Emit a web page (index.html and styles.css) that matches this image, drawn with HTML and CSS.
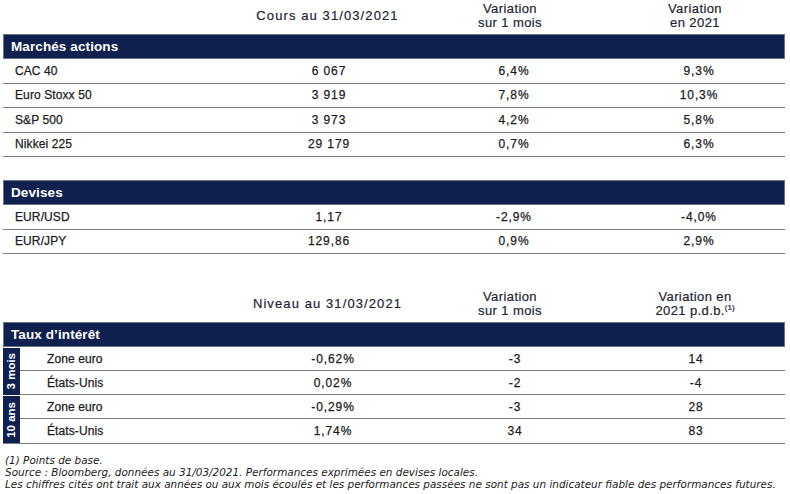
FILE: index.html
```html
<!DOCTYPE html>
<html lang="fr">
<head>
<meta charset="utf-8">
<title>Marchés</title>
<link rel="stylesheet" href="styles.css">
</head>
<body>
<div class="page">
  <section class="tbl">
    <div class="head">
      <div></div>
      <div class="hc date">Cours au 31/03/2021</div>
      <div class="hc">Variation<br>sur 1 mois</div>
      <div class="hc">Variation<br>en 2021</div>
    </div>
    <div class="bar">Marchés actions</div>
    <div class="row"><div class="lbl">CAC 40</div><div class="num">6 067</div><div class="num">6,4%</div><div class="num">9,3%</div></div>
    <div class="row"><div class="lbl">Euro Stoxx 50</div><div class="num">3 919</div><div class="num">7,8%</div><div class="num">10,3%</div></div>
    <div class="row"><div class="lbl">S&amp;P 500</div><div class="num">3 973</div><div class="num">4,2%</div><div class="num">5,8%</div></div>
    <div class="row"><div class="lbl">Nikkei 225</div><div class="num">29 179</div><div class="num">0,7%</div><div class="num">6,3%</div></div>
  </section>

  <section class="tbl t2">
    <div class="bar">Devises</div>
    <div class="row"><div class="lbl">EUR/USD</div><div class="num">1,17</div><div class="num">-2,9%</div><div class="num">-4,0%</div></div>
    <div class="row"><div class="lbl">EUR/JPY</div><div class="num">129,86</div><div class="num">0,9%</div><div class="num">2,9%</div></div>
  </section>

  <section class="tbl t3">
    <div class="head">
      <div></div>
      <div class="hc date">Niveau au 31/03/2021</div>
      <div class="hc">Variation<br>sur 1 mois</div>
      <div class="hc">Variation en<br>2021 p.d.b.<sup>(1)</sup></div>
    </div>
    <div class="bar">Taux d’intérêt</div>
    <div class="grp">
      <div class="side"><span>3 mois</span></div>
      <div class="rows">
        <div class="row r3"><div class="lbl">Zone euro</div><div class="num">-0,62%</div><div class="num">-3</div><div class="num">14</div></div>
        <div class="row r3"><div class="lbl">États-Unis</div><div class="num">0,02%</div><div class="num">-2</div><div class="num">-4</div></div>
      </div>
    </div>
    <div class="grp last">
      <div class="side"><span>10 ans</span></div>
      <div class="rows">
        <div class="row r3"><div class="lbl">Zone euro</div><div class="num">-0,29%</div><div class="num">-3</div><div class="num">28</div></div>
        <div class="row r3"><div class="lbl">États-Unis</div><div class="num">1,74%</div><div class="num">34</div><div class="num">83</div></div>
      </div>
    </div>
  </section>

  <footer class="notes">
    <p>(1) Points de base.</p>
    <p>Source : Bloomberg, données au 31/03/2021. Performances exprimées en devises locales.</p>
    <p>Les chiffres cités ont trait aux années ou aux mois écoulés et les performances passées ne sont pas un indicateur fiable des performances futures.</p>
  </footer>
</div>
</body>
</html>
```

FILE: styles.css
```css
* { box-sizing: border-box; }
html, body { margin: 0; padding: 0; background: #ffffff; }
body { font-family: "Liberation Sans", Arial, sans-serif; color: #1b1b1b; }

.page { width: 790px; padding: 0 5px 0 3px; }

.tbl { width: 782px; }
.t2 { margin-top: 23px; }
.t3 { margin-top: 34px; }

.head {
  display: grid;
  grid-template-columns: 237px 175px 190px 180px;
  height: 34px;
  padding-bottom: 3px;
  align-items: center;
}
.hc {
  text-align: center;
  font-size: 13px;
  line-height: 13.5px;
  letter-spacing: 0.4px;
  color: #1e2433;
  -webkit-text-stroke: 0.2px #1e2433;
}
.hc.date { letter-spacing: 1.1px; }
.hc sup { font-size: 8px; line-height: 0; vertical-align: 5px; letter-spacing: 0; }

.bar {
  height: 25px;
  background: #10214f;
  border: 1px solid #6b7389;
  color: #ffffff;
  font-weight: bold;
  font-size: 13.5px;
  letter-spacing: 0.1px;
  padding-left: 7px;
  display: flex;
  align-items: center;
}

.row {
  display: grid;
  grid-template-columns: 240px 172px 198px 172px;
  height: 24.5px;
  border-bottom: 1px solid #7d7d7d;
  align-items: center;
  font-size: 12px;
  -webkit-text-stroke: 0.25px #1b1b1b;
}
.lbl { padding-left: 12px; letter-spacing: 0.1px; }
.num { text-align: center; letter-spacing: 0.9px; }

.grp {
  display: grid;
  grid-template-columns: 17px 1fr;
}
.grp.last { border-bottom: 1px solid #7d7d7d; }
.grp.last .row:last-child { border-bottom: none; }
.side {
  background: #10214f;
  border-top: 1px solid #ffffff;
  display: flex;
  align-items: center;
  justify-content: center;
}
.side span {
  writing-mode: vertical-rl;
  transform: rotate(180deg);
  color: #ffffff;
  font-weight: bold;
  font-size: 11.5px;
  line-height: 15px;
}
.row.r3 { grid-template-columns: 223px 180px 184px 178px; height: 24px; }
.row.r3 .lbl { padding-left: 27px; }

.notes {
  margin-top: 10px;
  padding-left: 2px;
  font-family: "DejaVu Sans", Verdana, sans-serif;
  font-style: italic;
  font-size: 10.45px;
  line-height: 12px;
  color: #1b1b1b;
}
.notes p { margin: 0; }
```
